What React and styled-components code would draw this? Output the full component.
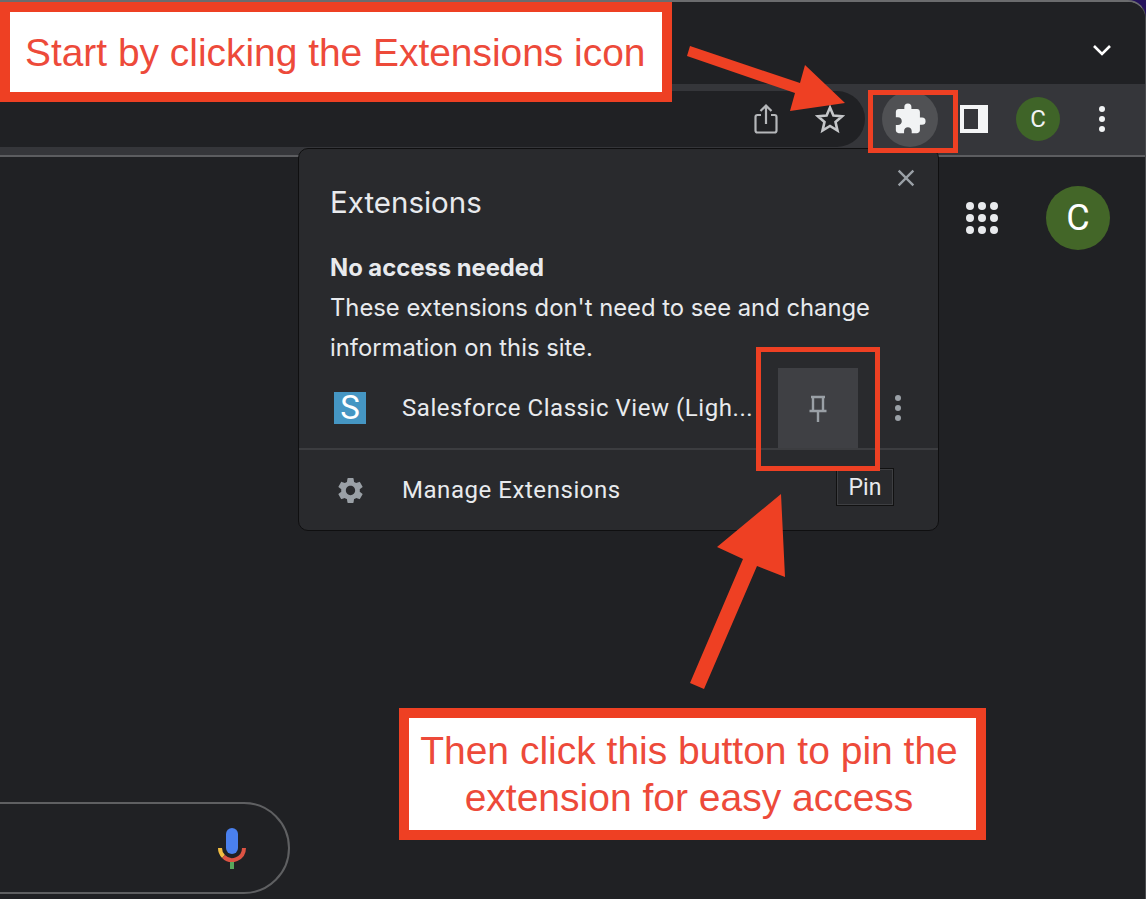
import styled, { createGlobalStyle } from "styled-components";
import { MdExtension, MdSettings, MdClose } from "react-icons/md";

const RED = "#ee4023";

const GlobalStyle = createGlobalStyle`
  html, body {
    margin: 0;
    padding: 0;
    background: #24125c;
    font-family: "Roboto", "Liberation Sans", sans-serif;
  }
`;

function App() {
  return (
    <>
      <GlobalStyle />
      <Page>
        <Window>
          <TabStrip>
            <Chevron viewBox="0 0 20 12">
              <path d="M2 2l8 8 8-8" fill="none" stroke="#fff" strokeWidth="2.6" />
            </Chevron>
          </TabStrip>
          <Toolbar>
            <Omnibox>
              <ShareIcon viewBox="0 0 24 30">
                <path
                  d="M7 11H3.5A2 2 0 0 0 1.5 13v13.5a2 2 0 0 0 2 2h17a2 2 0 0 0 2-2V13a2 2 0 0 0-2-2H17"
                  fill="none"
                  stroke="#b5b7ba"
                  strokeWidth="2.2"
                />
                <path d="M12 20V2M6.5 7L12 1.6 17.5 7" fill="none" stroke="#b5b7ba" strokeWidth="2.2" />
              </ShareIcon>
              <StarIcon viewBox="0 0 30 30">
                <path
                  d="M15 3.5l3.4 8.1 8.8.7-6.7 5.7 2 8.6-7.5-4.6-7.5 4.6 2-8.6-6.7-5.7 8.8-.7z"
                  fill="none"
                  stroke="#c4c6c9"
                  strokeWidth="2.6"
                />
              </StarIcon>
            </Omnibox>
            <ExtensionButton>
              <MdExtension size={34} color="#f1f3f4" />
            </ExtensionButton>
            <SidePanelIcon />
            <ToolbarAvatar>C</ToolbarAvatar>
            <Dots $size={6} $gap={4} $color="#f1f3f4" $margin="0 0 0 39px">
              <i />
              <i />
              <i />
            </Dots>
          </Toolbar>
          <Content>
            <AppBar>
              <AppsGrid>
                {Array.from({ length: 9 }).map((_, i) => (
                  <i key={i} />
                ))}
              </AppsGrid>
              <AccountAvatar>C</AccountAvatar>
            </AppBar>
            <SearchBox>
              <svg width="30" height="42" viewBox="0 0 30 42">
                <rect x="9" y="1" width="12" height="26" rx="6" fill="#4a80ee" />
                <path d="M3 21a12 12 0 0 0 3.5 8.5" fill="none" stroke="#f2bd42" strokeWidth="4" />
                <path d="M6.5 29.5a12 12 0 0 0 20.5-8.5" fill="none" stroke="#dc5343" strokeWidth="4" />
                <rect x="13" y="35" width="4" height="7" fill="#58a65c" />
              </svg>
            </SearchBox>
          </Content>
        </Window>

        <Popup>
          <CloseButton>
            <MdClose size={28} color="#9aa0a6" />
          </CloseButton>
          <PopupTitle>Extensions</PopupTitle>
          <Section>
            <SectionTitle>No access needed</SectionTitle>
            <SectionText>
              These extensions don't need to see and change
              <br />
              information on this site.
            </SectionText>
          </Section>
          <Row>
            <IconSlot>
              <SalesforceLogo>S</SalesforceLogo>
            </IconSlot>
            <RowLabel>Salesforce Classic View (Ligh...</RowLabel>
            <PinButton>
              <svg width="20" height="30" viewBox="0 0 20 30">
                <path
                  d="M3 4h14M5 4v14M15 4v14M1.5 18h17M10 18v11"
                  fill="none"
                  stroke="#9aa0a6"
                  strokeWidth="2.4"
                />
              </svg>
            </PinButton>
            <Dots $size={6} $gap={4} $color="#9aa0a6" $margin="0 0 0 37px">
              <i />
              <i />
              <i />
            </Dots>
          </Row>
          <FooterRow>
            <IconSlot>
              <MdSettings size={31} color="#9aa0a6" />
            </IconSlot>
            <RowLabel>Manage Extensions</RowLabel>
          </FooterRow>
        </Popup>

        <PinTooltip>Pin</PinTooltip>

        <TopCallout>Start by clicking the Extensions icon</TopCallout>
        <BottomCallout>
          Then click this button to pin the
          <br />
          extension for easy access
        </BottomCallout>
        <ExtensionHighlight />
        <PinHighlight />

        <Arrows viewBox="0 0 1146 899">
          <polygon
            fill={RED}
            points="690,46 800,83 805,65 845,103 790,111 795,93 687,56"
          />
          <polygon
            fill={RED}
            points="781,494 717,547 743,559 690,683 704,689 757,566 785,577"
          />
        </Arrows>
      </Page>
    </>
  );
}

const Page = styled.div`
  position: relative;
  width: 1146px;
  height: 899px;
  overflow: hidden;
`;

const Window = styled.div`
  display: flex;
  flex-direction: column;
  height: 100%;
  box-sizing: border-box;
  border-top: 2px solid #6b6c6e;
  border-right: 1px solid #4a4b4e;
  border-top-right-radius: 18px;
  background: #202124;
  overflow: hidden;
`;

const TabStrip = styled.div`
  display: flex;
  justify-content: flex-end;
  align-items: center;
  height: 82px;
  padding-right: 33px;
  box-sizing: border-box;
  background: #202124;
`;

const Chevron = styled.svg`
  width: 20px;
  height: 12px;
  margin-top: 14px;
`;

const Toolbar = styled.div`
  display: flex;
  align-items: center;
  height: 73px;
  box-sizing: border-box;
  padding: 8px 0 9px;
  background: #35363a;
  border-bottom: 2px solid #5c5d60;
`;

const Omnibox = styled.div`
  display: flex;
  align-items: center;
  justify-content: flex-end;
  width: 865px;
  height: 56px;
  padding-right: 20px;
  box-sizing: border-box;
  background: #202124;
  border-radius: 0 28px 28px 0;
`;

const ShareIcon = styled.svg`
  width: 24px;
  height: 30px;
  margin-right: 37px;
`;

const StarIcon = styled.svg`
  width: 30px;
  height: 30px;
`;

const ExtensionButton = styled.div`
  display: flex;
  align-items: center;
  justify-content: center;
  width: 56px;
  height: 56px;
  margin-left: 17px;
  border-radius: 50%;
  background: #505154;
`;

const SidePanelIcon = styled.div`
  width: 28px;
  height: 28px;
  margin-left: 22px;
  box-sizing: border-box;
  background: #35363a;
  border: 4px solid #f4f5f6;
  border-right-width: 10px;
`;

const ToolbarAvatar = styled.div`
  display: flex;
  align-items: center;
  justify-content: center;
  width: 44px;
  height: 44px;
  margin-left: 28px;
  border-radius: 50%;
  background: #3f6428;
  color: #f1f3f4;
  font-size: 24px;
`;

const Dots = styled.div`
  display: flex;
  flex-direction: column;
  gap: ${({ $gap }) => $gap}px;
  margin: ${({ $margin }) => $margin};

  i {
    display: block;
    width: ${({ $size }) => $size}px;
    height: ${({ $size }) => $size}px;
    border-radius: 50%;
    background: ${({ $color }) => $color};
  }
`;

const Content = styled.div`
  flex: 1;
  display: flex;
  flex-direction: column;
  justify-content: space-between;
  padding: 29px 35px 5px 0;
  background: #202124;
`;

const AppBar = styled.div`
  display: flex;
  align-items: center;
  justify-content: flex-end;
  gap: 48px;
`;

const AppsGrid = styled.div`
  display: grid;
  grid-template-columns: repeat(3, 8px);
  gap: 4px;

  i {
    width: 8px;
    height: 8px;
    border-radius: 50%;
    background: #e8eaed;
  }
`;

const AccountAvatar = styled.div`
  display: flex;
  align-items: center;
  justify-content: center;
  width: 64px;
  height: 64px;
  border-radius: 50%;
  background: #436628;
  color: #fff;
  font-size: 36px;
`;

const SearchBox = styled.div`
  display: flex;
  align-items: center;
  justify-content: flex-end;
  width: 340px;
  height: 92px;
  margin-left: -50px;
  padding-right: 41px;
  box-sizing: border-box;
  border: 2px solid #5f6062;
  border-radius: 46px;
`;

const Popup = styled.div`
  position: absolute;
  left: 298px;
  top: 148px;
  width: 641px;
  height: 383px;
  box-sizing: border-box;
  display: flex;
  flex-direction: column;
  background: #292a2d;
  border: 1px solid #0f0f10;
  border-radius: 10px;
  color: #e8eaed;
`;

const CloseButton = styled.div`
  position: absolute;
  right: 18px;
  top: 15px;
  display: flex;
`;

const PopupTitle = styled.div`
  padding: 34px 31px 0;
  height: 38px;
  line-height: 38px;
  font-family: "Inter", sans-serif;
  font-size: 29.5px;
  font-weight: 400;
`;

const Section = styled.div`
  padding: 27px 31px 0;
  font-family: "Inter", sans-serif;
  font-size: 23.8px;
`;

const SectionTitle = styled.div`
  height: 40px;
  line-height: 40px;
  font-weight: 700;
`;

const SectionText = styled.div`
  line-height: 40px;
  font-weight: 400;
`;

const Row = styled.div`
  display: flex;
  align-items: center;
  height: 80px;
  border-bottom: 2px solid #3c3d40;
`;

const FooterRow = styled(Row)`
  border-bottom: 0;
`;

const IconSlot = styled.div`
  display: flex;
  align-items: center;
  justify-content: center;
  width: 32px;
  margin: 0 36px 0 35px;
`;

const SalesforceLogo = styled.div`
  width: 32px;
  height: 32px;
  background: #4596c3;
  color: #fff;
  font-family: "Roboto", sans-serif;
  font-size: 33px;
  line-height: 32px;
  text-align: center;
`;

const RowLabel = styled.div`
  flex: 0 0 376px;
  font-family: "Roboto", sans-serif;
  font-size: 24px;
  letter-spacing: 0.55px;
  white-space: nowrap;
  color: #e8eaed;
`;

const PinButton = styled.div`
  display: flex;
  align-items: center;
  justify-content: center;
  width: 80px;
  height: 80px;
  background: #3f4044;
`;

const PinTooltip = styled.div`
  position: absolute;
  left: 836px;
  top: 468px;
  width: 58px;
  height: 38px;
  box-sizing: border-box;
  display: flex;
  align-items: center;
  justify-content: center;
  background: #292a2d;
  border: 1px solid #111;
  outline: 1px solid #3e3f42;
  outline-offset: -2px;
  color: #e8eaed;
  font-family: "Roboto", sans-serif;
  font-size: 23px;
`;

const TopCallout = styled.div`
  position: absolute;
  left: 0;
  top: 2px;
  width: 672px;
  height: 100px;
  box-sizing: border-box;
  display: flex;
  align-items: center;
  padding: 2px 0 0 15px;
  background: #fff;
  border: 10px solid ${RED};
  color: #ed4a3a;
  font-family: "Liberation Sans", Arial, sans-serif;
  font-size: 38.9px;
  white-space: nowrap;
`;

const BottomCallout = styled.div`
  position: absolute;
  left: 399px;
  top: 708px;
  width: 587px;
  height: 132px;
  box-sizing: border-box;
  display: flex;
  align-items: center;
  justify-content: center;
  padding: 0 7px 0 0;
  text-align: center;
  background: #fff;
  border: 10px solid ${RED};
  color: #ed4a3a;
  font-family: "Liberation Sans", Arial, sans-serif;
  font-size: 39px;
  line-height: 47px;
`;

const Highlight = styled.div`
  position: absolute;
  box-sizing: border-box;
  border: 5px solid ${RED};
`;

const ExtensionHighlight = styled(Highlight)`
  left: 868px;
  top: 90px;
  width: 90px;
  height: 63px;
`;

const PinHighlight = styled(Highlight)`
  left: 756px;
  top: 347px;
  width: 124px;
  height: 124px;
`;

const Arrows = styled.svg`
  position: absolute;
  left: 0;
  top: 0;
  width: 1146px;
  height: 899px;
  pointer-events: none;
`;

export default App;
